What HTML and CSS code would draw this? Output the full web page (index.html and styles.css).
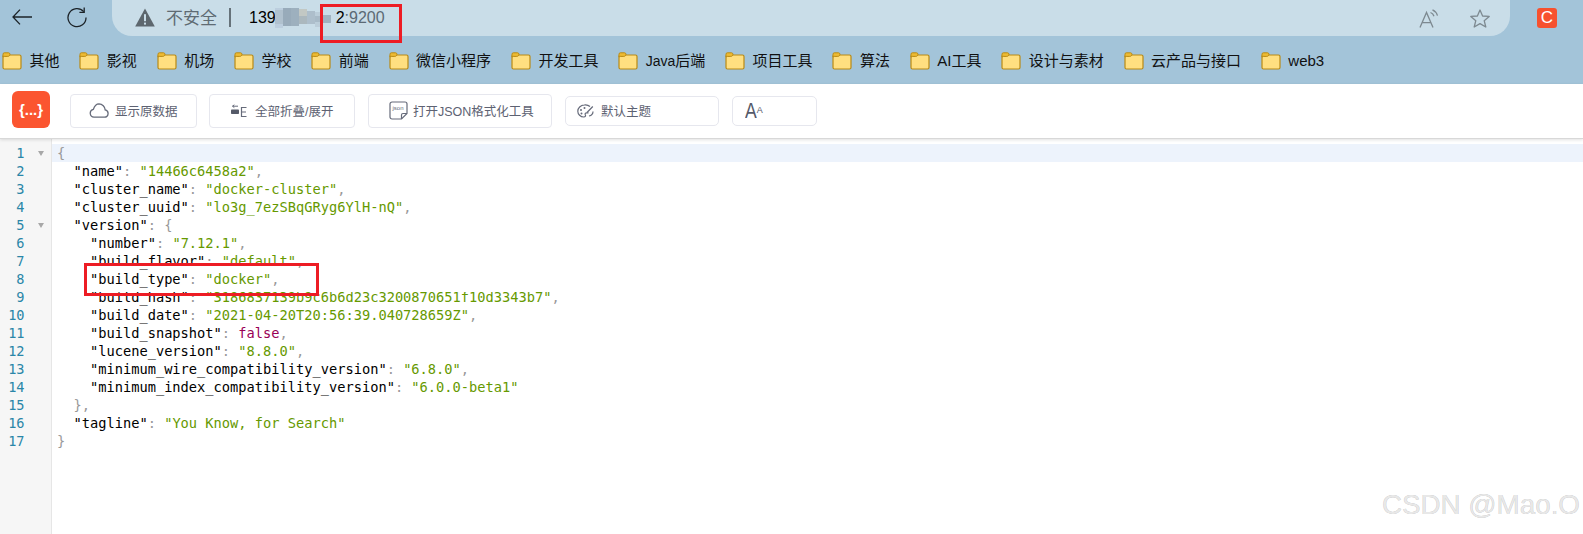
FILE: index.html
```html
<!DOCTYPE html>
<html lang="zh-CN">
<head>
<meta charset="utf-8">
<title>JSON</title>
<link rel="stylesheet" href="styles.css">
</head>
<body>
<svg class="sprite" width="0" height="0" aria-hidden="true">
  <symbol id="folder" viewBox="0 0 20 18">
    <path d="M1 4.5a1.5 1.5 0 0 1 1.5-1.5H17.5A1.5 1.5 0 0 1 19 4.5V15.5A1.5 1.5 0 0 1 17.5 17H2.5A1.5 1.5 0 0 1 1 15.5Z" fill="#ffdf80" stroke="#b98a14" stroke-width="1.2"/>
    <path d="M1 5V2.2A1.4 1.4 0 0 1 2.4 .8H6.5A1.6 1.6 0 0 1 8 2.2C8 3.5 7 4.4 5.8 4.4H2.2Z" fill="#eebb33" stroke="#b98a14" stroke-width="1"/>
  </symbol>
</svg>

<header class="nav">
  <svg class="back" width="20" height="16" viewBox="0 0 20 16"><path d="M20 8H1M8 .6 1 8l7 7.4" fill="none" stroke="#1c2328" stroke-width="1.3"/></svg>
  <svg class="reload" width="20" height="21" viewBox="0 0 20 21"><path d="M16.7 4.6A9 9 0 1 0 19 10.5" fill="none" stroke="#1c2328" stroke-width="1.3"/><path d="M17.2 .6V5.4H12.4" fill="none" stroke="#1c2328" stroke-width="1.3"/></svg>
  <div class="addr">
    <svg class="warn" width="20" height="19" viewBox="0 0 20 19"><path d="M10 .5 19.8 18.5H.2Z" fill="#5d676e"/><rect x="9" y="6.2" width="2" height="7" fill="#c9dde8"/><rect x="9" y="14.6" width="2" height="2" fill="#c9dde8"/></svg>
    <span class="unsafe">不安全</span>
    <span class="sep"></span>
    <span class="url">139<svg class="mosaic" width="56" height="20" viewBox="0 0 56 20"><rect width="8" height="20" x="0" fill="#bccede"/><rect width="8" height="14" x="0" y="2" fill="#b0c1ce"/><rect width="8" height="18" x="8" fill="#98abba"/><rect width="8" height="18" x="16" fill="#9db0be"/><rect width="8" height="14" x="24" y="1" fill="#c2c8c4"/><rect width="8" height="8" x="24" y="8" fill="#abb8be"/><rect width="8" height="13" x="32" y="3" fill="#adbecb"/><rect width="8" height="15" x="40" y="4" fill="#bbcdd9"/><rect width="8" height="6" x="40" y="8" fill="#a8bac7"/><rect width="8" height="8" x="48" y="7" fill="#a0b3c1"/></svg><span class="tail">2</span><span class="port">:9200</span></span>
    <svg class="read" width="20" height="19" viewBox="0 0 20 19"><path d="M1 18.5 7.5 3.5 14 18.5M3.4 13.6H11.6" fill="none" stroke="#7d8990" stroke-width="1.3"/><path d="M11.5 3.5A6 6 0 0 1 15 7.2M13.5 .8A9 9 0 0 1 18.5 6.6" fill="none" stroke="#7d8990" stroke-width="1.3"/></svg>
    <svg class="star" width="20" height="19" viewBox="0 0 20 19"><path d="M10 1 12.6 7 19.2 7.4 14.2 11.7 15.8 18 10 14.6 4.2 18 5.8 11.7 .8 7.4 7.4 7Z" fill="none" stroke="#7d8990" stroke-width="1.3" stroke-linejoin="round"/></svg>
  </div>
  <span class="ext">C</span>
</header>

<nav class="marks">
  <a class="mark"><svg class="fold-ic"><use href="#folder"/></svg>其他</a>
  <a class="mark"><svg class="fold-ic"><use href="#folder"/></svg>影视</a>
  <a class="mark"><svg class="fold-ic"><use href="#folder"/></svg>机场</a>
  <a class="mark"><svg class="fold-ic"><use href="#folder"/></svg>学校</a>
  <a class="mark"><svg class="fold-ic"><use href="#folder"/></svg>前端</a>
  <a class="mark"><svg class="fold-ic"><use href="#folder"/></svg>微信小程序</a>
  <a class="mark"><svg class="fold-ic"><use href="#folder"/></svg>开发工具</a>
  <a class="mark"><svg class="fold-ic"><use href="#folder"/></svg><span class="lat">Java</span>后端</a>
  <a class="mark"><svg class="fold-ic"><use href="#folder"/></svg>项目工具</a>
  <a class="mark"><svg class="fold-ic"><use href="#folder"/></svg>算法</a>
  <a class="mark"><svg class="fold-ic"><use href="#folder"/></svg>AI工具</a>
  <a class="mark"><svg class="fold-ic"><use href="#folder"/></svg>设计与素材</a>
  <a class="mark"><svg class="fold-ic"><use href="#folder"/></svg>云产品与接口</a>
  <a class="mark"><svg class="fold-ic"><use href="#folder"/></svg>web3</a>
</nav>

<section class="tools">
  <div class="logo">{...}</div>
  <button class="btn b1">
    <svg width="20" height="15" viewBox="0 0 20 15"><path d="M5 14.2H15.5A3.7 3.7 0 0 0 16.2 6.9 6.4 6.4 0 0 0 10 .9C7.6 .9 5.6 2.8 4.4 6.3A4 4 0 0 0 5 14.2Z" fill="none" stroke="#666b7a" stroke-width="1.3"/></svg>
    显示原数据
  </button>
  <button class="btn b2">
    <svg width="16" height="13" viewBox="0 0 16 13"><path d="M1.5 2.2H7M1.5 2.2 3.3 .8M1.5 2.2 3.3 3.6" fill="none" stroke="#666b7a" stroke-width="1"/><rect x="0" y="5.5" width="8" height="4.6" rx=".8" fill="#555a68"/><path d="M15.5 3.5H10.500V12.500H15.500M10.500 8H15" fill="none" stroke="#666b7a" stroke-width="1.2"/></svg>
    全部折叠/展开
  </button>
  <button class="btn b3">
    <svg width="19" height="19" viewBox="0 0 19 19"><path d="M12.5 18H3A2 2 0 0 1 1 16V3A2 2 0 0 1 3 1H16A2 2 0 0 1 18 3V12.5Z" fill="none" stroke="#666b7a" stroke-width="1.2"/><path d="M12.5 18V14A1.5 1.5 0 0 1 14 12.5H18" fill="none" stroke="#666b7a" stroke-width="1.2"/><text x="3.5" y="9" class="json-t">json</text></svg>
    打开JSON格式化工具
  </button>
  <div class="sel s1">
    <svg width="17" height="14" viewBox="0 0 17 14"><path d="M13 2.5C11.5 1.2 9.5 .7 7.5 .9 3.5 1.2 .8 4 .8 7.2S3.5 13 6.8 13C8.5 13 8.8 11.8 8.3 10.8 7.8 9.6 8.5 8.800 9.8 8.900H11.5" fill="none" stroke="#666b7a" stroke-width="1.2"/><path d="M10 8.5 15.8 2.5M16 7.5C16 9.5 14.5 11.5 12 12" fill="none" stroke="#666b7a" stroke-width="1.2"/><circle cx="4" cy="6" r="1" fill="#666b7a"/><circle cx="7.5" cy="4" r="1" fill="#666b7a"/><circle cx="4.5" cy="9.5" r="1" fill="#666b7a"/></svg>
    默认主题
  </div>
  <div class="sel s2"><span class="big-a">A</span><span class="small-a">A</span></div>
</section>

<main class="editor">
  <div class="gutter">
    <div class="gl"><span class="num">1</span><i class="tri"></i></div>
    <div class="gl"><span class="num">2</span></div>
    <div class="gl"><span class="num">3</span></div>
    <div class="gl"><span class="num">4</span></div>
    <div class="gl"><span class="num">5</span><i class="tri"></i></div>
    <div class="gl"><span class="num">6</span></div>
    <div class="gl"><span class="num">7</span></div>
    <div class="gl"><span class="num">8</span></div>
    <div class="gl"><span class="num">9</span></div>
    <div class="gl"><span class="num">10</span></div>
    <div class="gl"><span class="num">11</span></div>
    <div class="gl"><span class="num">12</span></div>
    <div class="gl"><span class="num">13</span></div>
    <div class="gl"><span class="num">14</span></div>
    <div class="gl"><span class="num">15</span></div>
    <div class="gl"><span class="num">16</span></div>
    <div class="gl"><span class="num">17</span></div>
  </div>
  <div class="code">
<div class="ln active"><span class="p">{</span></div>
<div class="ln">  <span class="k">"name"</span><span class="p">: </span><span class="s">"14466c6458a2"</span><span class="p">,</span></div>
<div class="ln">  <span class="k">"cluster_name"</span><span class="p">: </span><span class="s">"docker-cluster"</span><span class="p">,</span></div>
<div class="ln">  <span class="k">"cluster_uuid"</span><span class="p">: </span><span class="s">"lo3g_7ezSBqGRyg6YlH-nQ"</span><span class="p">,</span></div>
<div class="ln">  <span class="k">"version"</span><span class="p">: {</span></div>
<div class="ln">    <span class="k">"number"</span><span class="p">: </span><span class="s">"7.12.1"</span><span class="p">,</span></div>
<div class="ln">    <span class="k">"build_flavor"</span><span class="p">: </span><span class="s">"default"</span><span class="p">,</span></div>
<div class="ln cut">    <span class="k">"build_type"</span><span class="p">: </span><span class="s">"docker"</span><span class="p">,</span></div>
<div class="ln">    <span class="k">"build_hash"</span><span class="p">: </span><span class="s">"3186837139b9c6b6d23c3200870651f10d3343b7"</span><span class="p">,</span></div>
<div class="ln">    <span class="k">"build_date"</span><span class="p">: </span><span class="s">"2021-04-20T20:56:39.040728659Z"</span><span class="p">,</span></div>
<div class="ln">    <span class="k">"build_snapshot"</span><span class="p">: </span><span class="b">false</span><span class="p">,</span></div>
<div class="ln">    <span class="k">"lucene_version"</span><span class="p">: </span><span class="s">"8.8.0"</span><span class="p">,</span></div>
<div class="ln">    <span class="k">"minimum_wire_compatibility_version"</span><span class="p">: </span><span class="s">"6.8.0"</span><span class="p">,</span></div>
<div class="ln">    <span class="k">"minimum_index_compatibility_version"</span><span class="p">: </span><span class="s">"6.0.0-beta1"</span></div>
<div class="ln">  <span class="p">},</span></div>
<div class="ln">  <span class="k">"tagline"</span><span class="p">: </span><span class="s">"You Know, for Search"</span></div>
<div class="ln"><span class="p">}</span></div>
  </div>
</main>

<div class="mark-box url-box"></div>
<div class="mark-box line-box"></div>
<div class="watermark">CSDN @Mao.O</div>
</body>
</html>
```
FILE: styles.css
```css
* { box-sizing: border-box; }
html, body { margin: 0; height: 534px; overflow: hidden; background: #fff; }
body {
  position: relative;
  font-family: "Liberation Sans", "Noto Sans CJK SC", sans-serif;
  color: #111;
}
.sprite { display: block; }

/* browser nav */
.nav {
  height: 36px;
  background: #a3c4d9;
  display: flex;
  align-items: flex-start;
  padding-left: 12px;
}
.back { margin: 9px 0 0 0; flex: none; }
.reload { margin: 7px 0 0 35px; flex: none; }
.addr {
  margin-left: 25px;
  width: 1398px;
  height: 36px;
  background: #c9dde8;
  border-radius: 0 0 20px 20px;
  display: flex;
  align-items: center;
  padding-left: 23px;
  flex: none;
}
.warn { flex: none; margin-top: -2px; }
.unsafe { margin: -4px 0 0 11px; font-size: 17px; color: #5f6b73; }
.sep { width: 2px; height: 19px; background: #66727a; margin: -1px 0 0 12px; }
.url {
  margin-left: 18px;
  font-size: 16px;
  color: #000;
  display: flex;
  align-items: center;
}
.mosaic { margin-left: -1px; flex: none; }
.tail { margin-left: 5px; }
.port { color: #5b6a75; }
.read { margin: 0 0 0 auto; }
.star { margin: 0 20px 0 31px; }
.ext {
  margin: 8px 0 0 27px;
  width: 20px;
  height: 20px;
  border-radius: 3px;
  background: #f7512f;
  color: #fff;
  font-size: 17px;
  line-height: 20px;
  text-align: center;
  flex: none;
}

/* bookmarks */
.marks {
  height: 48px;
  background: #a3c4d9;
  display: flex;
  align-items: center;
  padding: 2px 0 0 2px;
  white-space: nowrap;
}
.mark {
  display: flex;
  align-items: center;
  font-size: 15px;
  line-height: 20px;
  color: #111;
  margin-right: 19.8px;
}
.lat { font-size: 14px; }
.fold-ic { width: 20px; height: 18px; margin-right: 7.5px; flex: none; }

/* json viewer toolbar */
.tools {
  height: 55px;
  background: #fff;
  display: flex;
  align-items: center;
  padding-left: 12px;
  border-bottom: 1px solid #d8d8d8;
  box-shadow: 0 1px 3px rgba(0, 0, 0, .12);
  position: relative;
  z-index: 2;
}
.logo {
  width: 38px;
  height: 37px;
  margin: -3px 20px 0 0;
  background: #fb5530;
  border-radius: 6px;
  color: #fff;
  font-size: 15px;
  font-weight: 700;
  line-height: 37px;
  text-align: center;
  flex: none;
}
.btn, .sel {
  display: flex;
  align-items: center;
  font-family: inherit;
  font-size: 12.5px;
  color: #5d6272;
  background: #fff;
  border: 1px solid #e6e7ee;
  border-radius: 4px;
  flex: none;
}
.btn { height: 34px; padding: 0; margin-top: -1px; }
.btn svg, .sel svg { flex: none; }
.b1 { width: 127px; padding-left: 18px; gap: 6px; margin-right: 12px; }
.b2 { width: 146px; padding-left: 21px; gap: 8px; margin-right: 13px; }
.b3 { width: 184px; padding-left: 20px; gap: 5px; margin-right: 13px; }
.sel { height: 30px; margin-top: -1px; border-radius: 5px; }
.s1 { width: 154px; padding-left: 11px; gap: 7px; margin-right: 13px; }
.s2 { width: 85px; padding-left: 12px; align-items: flex-start; line-height: 28px; }
.big-a { display: inline-block; font-size: 22px; color: #555a6a; transform: scaleX(.8); transform-origin: left center; margin-right: -3px; }
.small-a { font-size: 9px; line-height: 26px; color: #555a6a; }
.json-t { font-family: "Liberation Sans", sans-serif; font-size: 6px; fill: #666b7a; }

/* code */
.editor { display: flex; height: 395px; background: #fff; }
.gutter {
  flex: 0 0 52px;
  background: #f6f6f6;
  border-right: 1px solid #e6e6e6;
  padding-top: 5px;
}
.gl {
  height: 18px;
  display: flex;
  align-items: center;
  font: 13.6px/18px "DejaVu Sans Mono", monospace;
  color: #2a86a8;
}
.num { width: 24.5px; text-align: right; flex: none; }
.tri {
  margin-left: 13px;
  border-left: 3px solid transparent;
  border-right: 3px solid transparent;
  border-top: 5px solid #a8a8a8;
}
.code { flex: 1; padding-top: 5px; min-width: 0; }
.ln {
  height: 18px;
  padding-left: 5px;
  font: 13.69px/18px "DejaVu Sans Mono", monospace;
  white-space: pre;
  color: #000;
}
.active { background: #edf3fc; }
.cut { position: relative; background: #fff; box-shadow: 0 4px 0 #fff; }
.k { color: #000; }
.s { color: #669900; }
.b { color: #990055; }
.p { color: #999; }

/* annotations over the screenshot */
.mark-box { position: absolute; border: 3px solid #ed1c24; z-index: 3; }
.url-box { left: 320px; top: 4px; width: 82px; height: 39px; }
.line-box { left: 84px; top: 263px; width: 235px; height: 33px; }
.watermark {
  position: absolute;
  right: 3px;
  top: 489px;
  font-size: 27.8px;
  line-height: 32px;
  color: #e8e8e8;
  text-shadow: 0 0 .6px #a8a8a8;
  z-index: 3;
}
```
